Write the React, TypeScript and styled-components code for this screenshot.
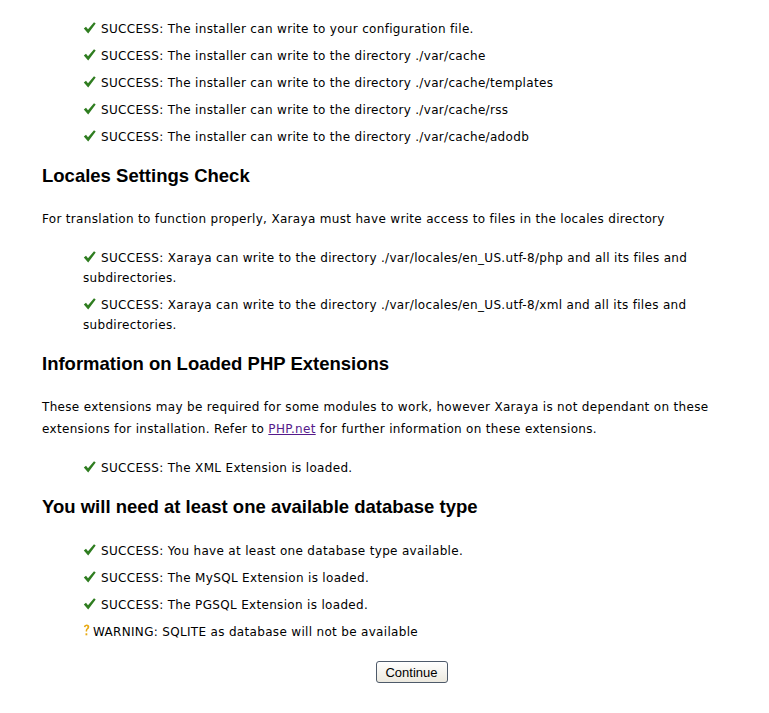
import React from 'react';
import styled, { createGlobalStyle } from 'styled-components';

const GlobalStyle = createGlobalStyle`
  body {
    margin: 0;
    background: #fff;
    color: #000;
    font-family: "DejaVu Sans", Tahoma, sans-serif;
    font-size: 12px;
    letter-spacing: 0.32px;
  }
`;

const Page = styled.div`
  width: 684px;
  padding: 19px 0 20px 42px;
`;

const Heading = styled.h3`
  font-family: "Liberation Sans", Arial, sans-serif;
  font-size: 18.5px;
  line-height: 22px;
  letter-spacing: 0;
  font-weight: bold;
  margin: 18px 0 21px;
`;

const Para = styled.p`
  margin: 0 0 18px;
  line-height: 22px;
`;

const List = styled.ul<{ $gap?: number }>`
  list-style: none;
  margin: 0;
  padding: ${(p) => p.$gap || 0}px 0 0 41px;
`;

const Item = styled.li`
  line-height: 20px;
  margin-bottom: 7px;
`;

const Icon = styled.svg`
  display: inline-block;
  vertical-align: -1px;
  margin-right: 5px;
`;

const Link = styled.a`
  color: #551a8b;
  text-decoration: underline;
`;

const Actions = styled.div`
  display: flex;
  justify-content: center;
  margin-top: 19px;
  padding-left: 55px;
`;

const Button = styled.button`
  font-family: "Liberation Sans", Arial, sans-serif;
  font-size: 13px;
  letter-spacing: 0;
  color: #000;
  width: 72px;
  height: 22px;
  padding: 0;
  border: 1px solid #4e5a6a;
  border-radius: 3px;
  background: linear-gradient(#ffffff, #ece9df);
`;

const Check = () => (
  <Icon width="13" height="12" viewBox="0 0 13 12">
    <path d="M0.8 6.4 L3 4.8 L5 7.3 L11 0.3 L12.7 1.6 L5.2 11.6 Z" fill="#2f7d20" />
  </Icon>
);

const Warn = () => (
  <Icon width="7" height="13" viewBox="0 0 7 13" style={{ marginRight: 3 }}>
    <path d="M0.8 3 Q1 0.5 3.6 0.5 Q6.4 0.5 6.3 3 Q6.2 4.6 4.6 5.5 Q4.1 6 4.1 7.6 L2.6 7.6 Q2.5 5.4 3.6 4.6 Q4.6 3.9 4.5 3 Q4.4 1.9 3.5 1.9 Q2.6 1.9 2.5 3.2 Z" fill="#e8a912" />
    <rect x="2.5" y="9.3" width="1.8" height="2" fill="#e8a912" />
  </Icon>
);

type Line = { kind: 'ok' | 'warn'; text: string };

const Lines = ({ items, gap }: { items: Line[]; gap?: number }) => (
  <List $gap={gap}>
    {items.map((it, i) => (
      <Item key={i}>
        {it.kind === 'ok' ? <Check /> : <Warn />}
        {it.text}
      </Item>
    ))}
  </List>
);

const ok = (text: string): Line => ({ kind: 'ok', text: 'SUCCESS: ' + text });

export default function App() {
  return (
    <Page>
      <GlobalStyle />
      <Lines
        items={[
          ok('The installer can write to your configuration file.'),
          ok('The installer can write to the directory ./var/cache'),
          ok('The installer can write to the directory ./var/cache/templates'),
          ok('The installer can write to the directory ./var/cache/rss'),
          ok('The installer can write to the directory ./var/cache/adodb'),
        ]}
      />
      <Heading>Locales Settings Check</Heading>
      <Para>For translation to function properly, Xaraya must have write access to files in the locales directory</Para>
      <Lines
        items={[
          ok('Xaraya can write to the directory ./var/locales/en_US.utf-8/php and all its files and subdirectories.'),
          ok('Xaraya can write to the directory ./var/locales/en_US.utf-8/xml and all its files and subdirectories.'),
        ]}
      />
      <Heading>Information on Loaded PHP Extensions</Heading>
      <Para>
        These extensions may be required for some modules to work, however Xaraya is not dependant on these
        extensions for installation. Refer to <Link href="#">PHP.net</Link> for further information on these extensions.
      </Para>
      <Lines items={[ok('The XML Extension is loaded.')]} />
      <Heading>You will need at least one available database type</Heading>
      <Lines
        gap={2}
        items={[
          ok('You have at least one database type available.'),
          ok('The MySQL Extension is loaded.'),
          ok('The PGSQL Extension is loaded.'),
          { kind: 'warn', text: 'WARNING: SQLITE as database will not be available' },
        ]}
      />
      <Actions>
        <Button>Continue</Button>
      </Actions>
    </Page>
  );
}
